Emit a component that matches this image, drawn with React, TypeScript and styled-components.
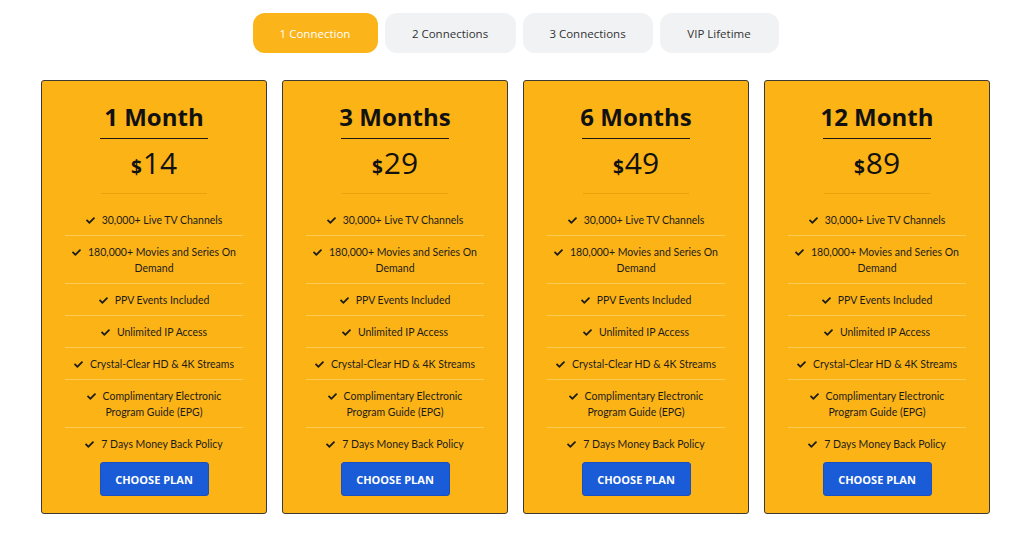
import React, { useState } from "react";
import styled, { createGlobalStyle } from "styled-components";
import { FaCheck } from "react-icons/fa";

const Global = createGlobalStyle`
  html, body { margin: 0; padding: 0; background: #ffffff; }
  body { font-family: "Open Sans", "Noto Sans", sans-serif; color: #222; }
  * { box-sizing: border-box; }
`;

const Page = styled.div`
  width: 1024px;
  padding: 13px 0 0 7px;
  display: flex;
  flex-direction: column;
  align-items: center;
`;

const Tabs = styled.div`
  display: flex;
  gap: 7px;
  margin-bottom: 27px;
`;

const Tab = styled.button<{ $active?: boolean; $w: number }>`
  width: ${(p) => p.$w}px;
  height: 40px;
  border: none;
  border-radius: 12px;
  font-family: inherit;
  font-size: 11.5px;
  cursor: pointer;
  background: ${(p) => (p.$active ? "#fbb41a" : "#f0f2f4")};
  color: ${(p) => (p.$active ? "#ffffff" : "#333333")};
  padding: 0;
`;

const Grid = styled.div`
  display: grid;
  grid-template-columns: repeat(4, 226px);
  gap: 15px;
`;

const Card = styled.div`
  height: 434px;
  background: #fcb316;
  border: 1px solid #3d3a33;
  border-radius: 3px;
  padding: 21px 24px 16px;
  display: flex;
  flex-direction: column;
  align-items: center;
`;

const Title = styled.h3`
  margin: 0;
  font-size: 24px;
  line-height: 30px;
  font-weight: 700;
  color: #111;
`;

const Rule = styled.div<{ $light?: boolean }>`
  width: ${(p) => (p.$light ? 106 : 108)}px;
  height: 1px;
  background: ${(p) => (p.$light ? "rgba(230, 160, 10, 0.9)" : "#1e1a12")};
`;

const Price = styled.div`
  margin: 4px 0 6px;
  font-size: 30px;
  line-height: 40px;
  color: #111;
  font-weight: 500;
`;

const Dollar = styled.span`
  font-size: 19px;
  font-weight: 700;
  margin-right: 1px;
`;

const List = styled.ul`
  list-style: none;
  margin: 10px 0 0;
  padding: 0;
  width: 178px;
`;

const Item = styled.li`
  padding: 7.5px 5px;
  font-family: Lato, "Open Sans", sans-serif;
  font-size: 10.5px;
  line-height: 16px;
  text-align: center;
  color: #1c1c1c;
  border-bottom: 1px solid rgba(255, 222, 140, 0.55);
  &:last-child { border-bottom: none; }
  svg { margin-right: 7px; vertical-align: -1px; }
`;

const Choose = styled.button`
  margin-top: 3px;
  width: 109px;
  height: 34px;
  border: 1px solid #1a4fc0;
  border-radius: 3px;
  background: #1a5bd8;
  color: #ffffff;
  font-family: inherit;
  font-size: 11px;
  font-weight: 700;
  cursor: pointer;
`;

const features = [
  "30,000+ Live TV Channels",
  "180,000+ Movies and Series On Demand",
  "PPV Events Included",
  "Unlimited IP Access",
  "Crystal-Clear HD & 4K Streams",
  "Complimentary Electronic Program Guide (EPG)",
  "7 Days Money Back Policy",
];

const plans = [
  { title: "1 Month", price: 14 },
  { title: "3 Months", price: 29 },
  { title: "6 Months", price: 49 },
  { title: "12 Month", price: 89 },
];

const tabs = [
  { label: "1 Connection", w: 125 },
  { label: "2 Connections", w: 131 },
  { label: "3 Connections", w: 130 },
  { label: "VIP Lifetime", w: 119 },
];

export default function App() {
  const [active, setActive] = useState(0);
  return (
    <>
      <Global />
      <Page>
        <Tabs>
          {tabs.map((t, i) => (
            <Tab key={t.label} $w={t.w} $active={i === active} onClick={() => setActive(i)}>
              {t.label}
            </Tab>
          ))}
        </Tabs>
        <Grid>
          {plans.map((p) => (
            <Card key={p.title}>
              <Title>{p.title}</Title>
              <Rule style={{ marginTop: 6 }} />
              <Price>
                <Dollar>$</Dollar>
                {p.price}
              </Price>
              <Rule $light />
              <List>
                {features.map((f) => (
                  <Item key={f}>
                    <FaCheck size={9} />
                    {f}
                  </Item>
                ))}
              </List>
              <Choose>CHOOSE PLAN</Choose>
            </Card>
          ))}
        </Grid>
      </Page>
    </>
  );
}
